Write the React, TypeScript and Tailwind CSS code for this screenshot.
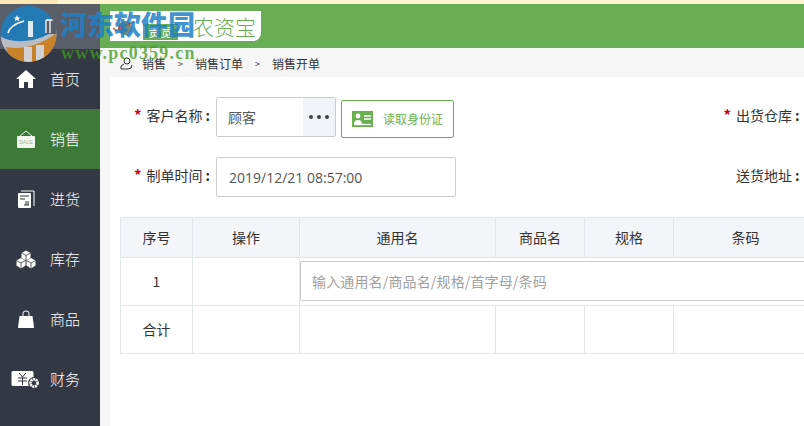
import React from "react";

const cjk = "font-['Noto_Sans_CJK_SC','Liberation_Sans',sans-serif]";

const HomeIcon = () => (
  <svg width="22" height="20" viewBox="0 0 22 20"><path d="M11 1 L21 10 H18 V19 H13 V13 H9 V19 H4 V10 H1 Z" fill="#fff" /></svg>
);
const SaleIcon = () => (
  <svg width="20" height="19" viewBox="0 0 20 19">
    <path d="M4 6 L10 1 L16 6" fill="none" stroke="#e8f0e4" strokeWidth="1" />
    <rect x="1" y="6" width="18" height="12" rx="1" fill="#f2f6ef" />
    <text x="10" y="14" fontSize="5.5" fill="#9cb894" textAnchor="middle" fontFamily="Liberation Sans">SALE</text>
  </svg>
);
const PurchaseIcon = () => (
  <svg width="18" height="19" viewBox="0 0 18 19">
    <path d="M4 1 H17 V16" fill="none" stroke="#fff" strokeWidth="1" />
    <rect x="1" y="3" width="13" height="15" rx="1" fill="#fff" />
    <path d="M3 6 H12 M3 9 H8" stroke="#343844" strokeWidth="1.2" />
    <path d="M7 15 H12 M9 11 V15 M11 11 V15" stroke="#343844" strokeWidth="1" />
  </svg>
);
const StockIcon = () => (
  <svg width="20" height="19" viewBox="0 0 20 19">
    <path d="M10 0.5 L14.5 3 V8 L10 10.5 L5.5 8 V3 Z" fill="#fff" />
    <path d="M5 8 L9.5 10.5 V15.5 L5 18.5 L0.5 15.5 V10.5 Z" fill="#fff" />
    <path d="M15 8 L19.5 10.5 V15.5 L15 18.5 L10.5 15.5 V10.5 Z" fill="#fff" />
    <path d="M0.5 10.5 L5 13 L9.5 10.5 M5 13 V18.5 M10.5 10.5 L15 13 L19.5 10.5 M15 13 V18.5 M5.5 3 L10 5.5 L14.5 3 M10 5.5 V10.5" fill="none" stroke="#343844" strokeWidth=".8" />
  </svg>
);
const BagIcon = () => (
  <svg width="18" height="19" viewBox="0 0 18 19">
    <path d="M6 6 V3 Q6 1 9 1 Q12 1 12 3 V6" fill="none" stroke="#fff" strokeWidth="1" />
    <path d="M2.5 6 H15.5 L17 17.5 Q17 18 16 18 H2 Q1 18 1 17.5 Z" fill="#fff" />
  </svg>
);
const FinanceIcon = () => (
  <svg width="29" height="19" viewBox="0 0 29 19">
    <rect x="0.5" y="1" width="22" height="15" rx="1.5" fill="#fff" />
    <path d="M8 3 L11.5 7 L15 3 M7 8 H16 M7 11 H16 M11.5 7 V15" fill="none" stroke="#343844" strokeWidth="1" />
    <circle cx="23" cy="13" r="6" fill="#343844" />
    <circle cx="23" cy="13" r="3.6" fill="none" stroke="#fff" strokeWidth="2.6" strokeDasharray="2 .6" />
  </svg>
);
const CardIcon = () => (
  <svg width="21" height="16" viewBox="0 0 21 16">
    <rect width="21" height="16" fill="#6ab04f" />
    <circle cx="6" cy="5" r="2.4" fill="#fff" />
    <path d="M2 13 Q2 9 6 9 Q10 9 10 13 Z" fill="#fff" />
    <path d="M12 5 H19 M12 8 H19" stroke="#fff" strokeWidth="1.3" />
    <path d="M2 13.5 H19" stroke="#fff" strokeWidth="1.3" />
  </svg>
);
const PinIcon = () => (
  <svg width="13" height="13" viewBox="0 0 13 13">
    <circle cx="7" cy="4" r="3" fill="none" stroke="#333" />
    <path d="M4 7 L1 9 V12 H8 Q12 12 12 8" fill="none" stroke="#333" />
  </svg>
);
const BrandMark = () => (
  <svg width="28" height="28" viewBox="0 0 28 28">
    <circle cx="14" cy="16" r="7" fill="#7a8a70" />
    <circle cx="10" cy="16" r="3" fill="#c8552c" />
    <path d="M16 13 L23 10 M6 19 L2 16" stroke="#c8552c" strokeWidth="1.4" />
  </svg>
);
// round site logo of the watermark
const WatermarkLogo = () => (
  <svg width="57" height="63" viewBox="0 0 57 63">
    <defs>
      <clipPath id="disc"><circle cx="28.5" cy="34" r="28" /></clipPath>
    </defs>
    <g clipPath="url(#disc)">
      <rect width="57" height="63" fill="#237ab4" />
      <path d="M0 36 Q8 42 24 41 Q44 40 57 28 V63 H0 Z" fill="#b9bcc2" />
      <path d="M6 47 Q30 52 57 33 V63 H10 Z" fill="#c9812a" />
      <rect x="24" y="47" width="8" height="16" fill="#cfd1d4" />
      <rect x="36" y="45" width="8" height="18" fill="#cfd1d4" />
      <path d="M45 19 H57 V34 H45 Z" fill="#5a5e68" />
      <path d="M46 20 V33 M50 21 V33 M46 20 H55" stroke="#fff" strokeWidth="1.3" fill="none" />
      <path d="M8 33 Q10 25 24 21" stroke="#fff" strokeWidth="1.6" fill="none" />
      <path d="M28 21 H33 V37 H28 Z" fill="#fff" opacity=".85" />
    </g>
    <path d="M17 15 l1 2.4 2.4 0 -1.9 1.5 .7 2.4 -2.2 -1.4 -2.2 1.4 .7 -2.4 -1.9 -1.5 2.4 0z" fill="#fff" />
  </svg>
);

const menu = [
  { label: "销售", icon: <SaleIcon />, active: true },
  { label: "进货", icon: <PurchaseIcon /> },
  { label: "库存", icon: <StockIcon /> },
  { label: "商品", icon: <BagIcon /> },
  { label: "财务", icon: <FinanceIcon /> },
];

const cols = ["w-[72px]", "w-[107px]", "w-[196px]", "w-[89px]", "w-[89px]", "w-[144px]"];
const heads = ["序号", "操作", "通用名", "商品名", "规格", "条码"];

const Label = ({ text, star }: { text: string; star?: boolean }) => (
  <span className="flex items-center text-[14px] text-[#333] whitespace-nowrap">
    {star && <span className="text-[#d0021b] mr-[5px] text-[15px] font-bold">*</span>}
    {text}
    <span className="ml-[3px] w-[9px] font-bold">:</span>
  </span>
);

const App = () => {
  return (
    <div className={`w-[804px] h-[426px] overflow-hidden relative flex flex-col bg-white ${cjk}`}>
      <div className="h-1 bg-[#fdf3d0] shrink-0 flex"><div className="w-[57px] bg-[#fbe8b4]" /></div>
      <div className="flex flex-1 min-h-0">
        <aside className="w-[100px] shrink-0 bg-[#343844] text-white flex flex-col">
          <div className="h-[45px] bg-[#5a5e68]" />
          <div className="h-[60px] flex items-center text-[15px] pl-[15px] gap-3">
            <HomeIcon />
            <span className="ml-[1px] font-light">首页</span>
          </div>
          <div className="flex flex-col">
            {menu.map((m) => (
              <div key={m.label} className={`h-[60px] flex items-center text-[15px] ${m.active ? "bg-[#3d7a38]" : ""}`}>
                <div className="w-[50px] flex justify-center shrink-0 pl-[1px]">{m.icon}</div>
                <span className="font-light">{m.label}</span>
              </div>
            ))}
          </div>
        </aside>
        <div className="flex-1 min-w-0 flex flex-col">
          <header className="h-[44px] bg-[#67ae55] shrink-0 flex items-start pt-[7px] pl-[10px]">
            <div className="h-[30px] w-[151px] bg-white rounded-br-lg flex items-center text-[#67ae55]">
              <div className="w-[30px] shrink-0 flex justify-center"><BrandMark /></div>
              <div className="ml-[3px] mt-[12px] w-[35px] h-[16px] bg-[#67ae55] text-white text-[12px] leading-[16px] text-center shrink-0">贵宽</div>
              <div className="ml-[15px] text-[21px] leading-[30px] whitespace-nowrap font-light">农资宝</div>
            </div>
          </header>
          <div className="h-[29px] bg-[#f6f6f6] shrink-0 flex items-center pl-[20px] pt-[2px] text-[12px] text-[#333]">
            <PinIcon />
            <span className="ml-[9px]">销售</span>
            <span className="text-[9px] w-[29px] text-center">&gt;</span>
            <span>销售订单</span>
            <span className="text-[9px] w-[29px] text-center">&gt;</span>
            <span>销售开单</span>
          </div>
          <div className="flex-1 min-h-0 flex bg-[#f6f6f6] pl-[10px]">
            <main className="flex-1 min-w-0 bg-white pt-[20px] pl-[10px] overflow-hidden">
              <div className="flex h-[40px] pl-[14px]">
                <div className="w-[82px] h-[36px] shrink-0 flex items-center"><Label text="客户名称" star /></div>
                <div className="w-[120px] h-[40px] shrink-0 flex border border-[#ccc] rounded-[2px] text-[14px] text-[#555]">
                  <div className="flex-1 flex items-center pl-[11px]">顾客</div>
                  <div className="w-[32px] bg-[#f0f3f8] flex items-center justify-center gap-[4px]">
                    <i className="w-[4px] h-[4px] rounded-full bg-[#444]" />
                    <i className="w-[4px] h-[4px] rounded-full bg-[#444]" />
                    <i className="w-[4px] h-[4px] rounded-full bg-[#444]" />
                  </div>
                </div>
                <button className="ml-[5px] mt-[3px] w-[113px] h-[38px] border border-[#6ab04f] rounded-[2px] flex items-center pl-[10px] gap-[10px] text-[12px] text-[#6ab04f] bg-white shrink-0">
                  <CardIcon />
                  读取身份证
                </button>
                <div className="ml-auto h-[36px] flex items-center"><Label text="出货仓库" star /></div>
              </div>
              <div className="flex h-[40px] mt-[20px] pl-[14px]">
                <div className="w-[82px] h-[36px] shrink-0 flex items-center"><Label text="制单时间" star /></div>
                <div className="w-[240px] h-[40px] shrink-0 border border-[#ccc] rounded-[2px] flex items-center pl-[12px] text-[14px] text-[#555] font-['Open_Sans',sans-serif]">2019/12/21 08:57:00</div>
                <div className="ml-auto h-[36px] flex items-center"><Label text="送货地址" /></div>
              </div>
              <div className="mt-[20px] w-[698px] text-[14px] text-[#333] border-t border-l border-[#e1e6eb]">
                <div className="flex h-[40px] bg-[#f3f5f9]">
                  {heads.map((h, i) => (
                    <div key={h} className={`${cols[i]} shrink-0 flex items-center justify-center border-r border-b border-[#e1e6eb]`}>{h}</div>
                  ))}
                </div>
                <div className="flex h-[48px]">
                  <div className={`${cols[0]} shrink-0 flex items-center justify-center border-r border-b border-[#e1e6eb]`}>1</div>
                  <div className={`${cols[1]} shrink-0 border-r border-b border-[#e1e6eb]`} />
                  <div className="flex-1 min-w-0 border-b border-[#e1e6eb] pt-[3px]">
                    <div className="h-[40px] w-[540px] border border-[#ccc] rounded-l-[2px] flex items-center pl-[11px] text-[#a0a0a0] text-[14px] tracking-[0.15px]">输入通用名/商品名/规格/首字母/条码</div>
                  </div>
                </div>
                <div className="flex h-[48px]">
                  <div className={`${cols[0]} shrink-0 flex items-center justify-center border-r border-b border-[#e1e6eb]`}>合计</div>
                  {cols.slice(1).map((c) => (
                    <div key={c} className={`${c} shrink-0 border-r border-b border-[#e1e6eb]`} />
                  ))}
                </div>
              </div>
            </main>
          </div>
        </div>
      </div>
      {/* site watermark stamped over the screenshot */}
      <div className="absolute left-0 top-0"><WatermarkLogo /></div>
      <div className="absolute left-[60px] top-[6px] text-[27px] leading-[36px] font-black text-[#1f7fc8]/85 whitespace-nowrap font-['Noto_Sans_CJK_SC',sans-serif]">河东软件园</div>
      <div className="absolute left-[61px] top-[43px] text-[18px] leading-[20px] font-bold text-[#3f9a20]/75 whitespace-nowrap font-['Liberation_Serif',serif] tracking-[1.2px]">www.pc0359.cn</div>
    </div>
  );
};

export default App;
